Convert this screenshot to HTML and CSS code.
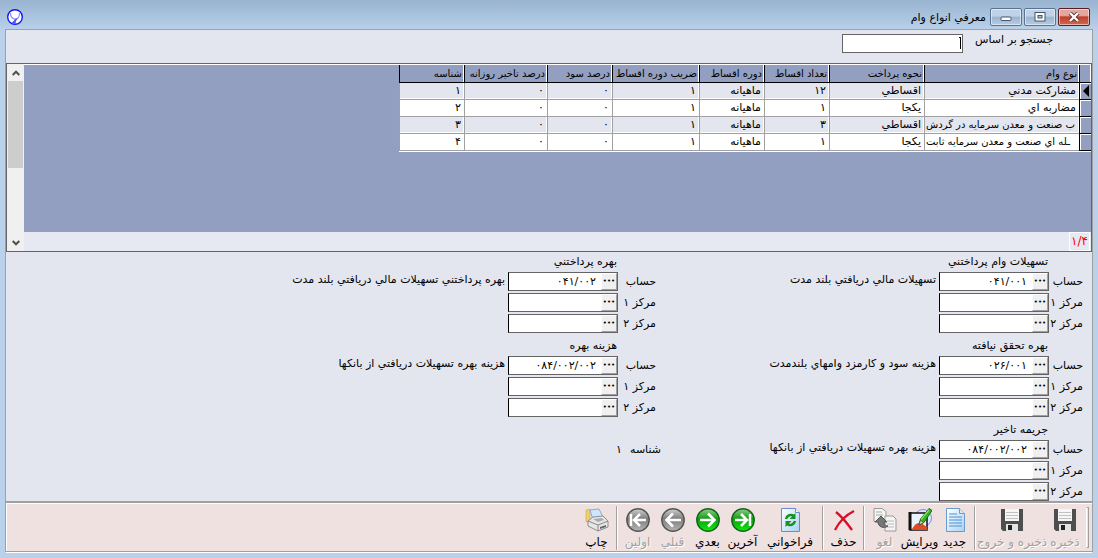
FILE: index.html
```html
<!DOCTYPE html>
<html lang="fa" dir="rtl">
<head>
<meta charset="utf-8">
<title>معرفي انواع وام</title>
<link rel="stylesheet" href="styles.css">
</head>
<body>
<header class="titlebar">
  <div class="window-buttons">
    <button class="win-btn close" aria-label="بستن"><svg width="12" height="10" viewBox="0 0 12 10"><path d="M2 1l8 8M10 1L2 9" stroke="#54323a" stroke-width="4"/><path d="M2 1l8 8M10 1L2 9" stroke="#fff" stroke-width="2.4"/></svg></button>
    <button class="win-btn" aria-label="بزرگ"><svg width="12" height="10" viewBox="0 0 12 10"><rect x="1" y=".5" width="10" height="8.500" fill="#fff" stroke="#47566b"/><rect x="4" y="3.500" width="4" height="2.500" fill="#a8bdd4" stroke="#47566b"/></svg></button>
    <button class="win-btn" aria-label="کوچک"><svg width="12" height="10" viewBox="0 0 12 10"><rect x="1" y="5" width="10" height="3.500" rx="1" fill="#fff" stroke="#47566b"/></svg></button>
  </div>
  <h1 class="title">معرفي انواع وام</h1>
  <svg class="app-icon" width="16" height="16" viewBox="0 0 16 16"><circle cx="8" cy="8" r="7.300" fill="#fff" stroke="#1414ee" stroke-width="1.400"/><path d="M3.500 4c-.3 4 2 6 5 6 3-.3 4-3 4-6" fill="none" stroke="#8f93ff" stroke-width="1.200"/><path d="M4.500 14l2-2 1.500-2 3-1-2 3-.5 3z" fill="#5058f0"/></svg>
</header>
<main class="window">
  <div class="search">
    <label for="q">جستجو بر اساس</label>
    <div class="search-box"><input id="q" type="text"><span class="caret"></span></div>
  </div>
  <section class="grid">
    <div class="grid-main">
      <div class="grid-view">
        <table>
          <colgroup><col class="c-mark"><col class="c-name"><col class="c-pay"><col class="c-std"><col class="c-std"><col class="c-rate"><col class="c-std"><col class="c-late"><col class="c-std"></colgroup>
          <thead><tr><th></th><th>نوع وام</th><th>نحوه پرداخت</th><th>تعداد اقساط</th><th>دوره اقساط</th><th>ضريب دوره اقساط</th><th>درصد سود</th><th>درصد تاخير روزانه</th><th>شناسه</th></tr></thead>
          <tbody>
            <tr><td class="mark"><svg width="8" height="12" viewBox="0 0 8 12"><path d="M7 0v12L1 6z"/></svg></td><td>مشارکت مدني</td><td>اقساطي</td><td>۱۲</td><td>ماهيانه</td><td>۱</td><td>۰</td><td>۰</td><td>۱</td></tr>
            <tr><td class="mark"></td><td>مضاربه اي</td><td>يکجا</td><td>۱</td><td>ماهيانه</td><td>۱</td><td>۰</td><td>۰</td><td>۲</td></tr>
            <tr><td class="mark"></td><td><div class="tail">ب صنعت و معدن سرمايه در گردش</div></td><td>اقساطي</td><td>۳</td><td>ماهيانه</td><td>۱</td><td>۰</td><td>۰</td><td>۳</td></tr>
            <tr><td class="mark"></td><td><div class="tail">ـله اي صنعت و معدن سرمايه ثابت</div></td><td>يکجا</td><td>۱</td><td>ماهيانه</td><td>۱</td><td>۰</td><td>۰</td><td>۴</td></tr>
          </tbody>
        </table>
      </div>
      <div class="grid-status"><span class="count">۱/۴</span></div>
    </div>
    <div class="scrollbar">
      <button aria-label="بالا"><svg width="8" height="6" viewBox="0 0 8 6"><path d="M.7 5L4 1.700 7.300 5" fill="none" stroke="#505050" stroke-width="2"/></svg></button>
      <div class="track"><div class="thumb"></div></div>
      <button aria-label="پايين"><svg width="8" height="6" viewBox="0 0 8 6"><path d="M.7 1L4 4.300 7.300 1" fill="none" stroke="#505050" stroke-width="2"/></svg></button>
    </div>
  </section>
  <form class="accounts">
    <fieldset class="group"><legend>تسهيلات وام پرداختني</legend>
      <div class="row"><label for="a1">حساب</label><div class="lookup"><button type="button" aria-label="انتخاب">•••</button><input id="a1" value="۰۴۱/۰۰۱"></div><span class="desc">تسهيلات مالي دريافتي بلند مدت</span></div>
      <div class="row"><label for="a2">مرکز ۱</label><div class="lookup"><button type="button" aria-label="انتخاب">•••</button><input id="a2"></div></div>
      <div class="row"><label for="a3">مرکز ۲</label><div class="lookup"><button type="button" aria-label="انتخاب">•••</button><input id="a3"></div></div>
    </fieldset>
    <fieldset class="group wide"><legend>بهره پرداختني</legend>
      <div class="row"><label for="b1">حساب</label><div class="lookup"><button type="button" aria-label="انتخاب">•••</button><input id="b1" value="۰۴۱/۰۰۲"></div><span class="desc">بهره پرداختني تسهيلات مالي دريافتي بلند مدت</span></div>
      <div class="row"><label for="b2">مرکز ۱</label><div class="lookup"><button type="button" aria-label="انتخاب">•••</button><input id="b2"></div></div>
      <div class="row"><label for="b3">مرکز ۲</label><div class="lookup"><button type="button" aria-label="انتخاب">•••</button><input id="b3"></div></div>
    </fieldset>
    <fieldset class="group"><legend>بهره تحقق نيافته</legend>
      <div class="row"><label for="c1">حساب</label><div class="lookup"><button type="button" aria-label="انتخاب">•••</button><input id="c1" value="۰۲۶/۰۰۱"></div><span class="desc">هزينه سود و کارمزد وامهاي بلندمدت</span></div>
      <div class="row"><label for="c2">مرکز ۱</label><div class="lookup"><button type="button" aria-label="انتخاب">•••</button><input id="c2"></div></div>
      <div class="row"><label for="c3">مرکز ۲</label><div class="lookup"><button type="button" aria-label="انتخاب">•••</button><input id="c3"></div></div>
    </fieldset>
    <fieldset class="group wide"><legend>هزينه بهره</legend>
      <div class="row"><label for="d1">حساب</label><div class="lookup"><button type="button" aria-label="انتخاب">•••</button><input id="d1" value="۰۸۴/۰۰۲/۰۰۲"></div><span class="desc">هزينه بهره تسهيلات دريافتي از بانکها</span></div>
      <div class="row"><label for="d2">مرکز ۱</label><div class="lookup"><button type="button" aria-label="انتخاب">•••</button><input id="d2"></div></div>
      <div class="row"><label for="d3">مرکز ۲</label><div class="lookup"><button type="button" aria-label="انتخاب">•••</button><input id="d3"></div></div>
    </fieldset>
    <fieldset class="group"><legend>جريمه تاخير</legend>
      <div class="row"><label for="e1">حساب</label><div class="lookup"><button type="button" aria-label="انتخاب">•••</button><input id="e1" value="۰۸۴/۰۰۲/۰۰۲"></div><span class="desc">هزينه بهره تسهيلات دريافتي از بانکها</span></div>
      <div class="row"><label for="e2">مرکز ۱</label><div class="lookup"><button type="button" aria-label="انتخاب">•••</button><input id="e2"></div></div>
      <div class="row"><label for="e3">مرکز ۲</label><div class="lookup"><button type="button" aria-label="انتخاب">•••</button><input id="e3"></div></div>
    </fieldset>
    <div class="ident"><span>شناسه</span><span>۱</span></div>
  </form>
  <svg class="defs" width="0" height="0" aria-hidden="true">
    <defs>
      <linearGradient id="green" x1="0" y1="0" x2="0" y2="1"><stop offset="0" stop-color="#8fce8f"/><stop offset=".45" stop-color="#119a11"/><stop offset="1" stop-color="#08f008"/></linearGradient>
      <linearGradient id="gray" x1="0" y1="0" x2="0" y2="1"><stop offset="0" stop-color="#d0d0d0"/><stop offset=".45" stop-color="#7c7c7c"/><stop offset="1" stop-color="#b5b5b5"/></linearGradient>
      <linearGradient id="sheet" x1="0" y1="0" x2="1" y2="1"><stop offset="0" stop-color="#fff"/><stop offset="1" stop-color="#a9d2f5"/></linearGradient>
      <symbol id="floppy" viewBox="0 0 24 24"><path d="M1 1h22v22H3l-2-2z" fill="#4e4e4e"/><path d="M5 1h14v12H5z" fill="#f6f6f6"/><path d="M6 4.500h12M6 7.500h12M6 10.500h12" stroke="#c2c2c2"/><path d="M6 16h12v7H6z" fill="#e4e4e4"/><path d="M8 17h4v5H8z" fill="#222"/></symbol>
    </defs>
  </svg>
  <nav class="toolbar">
    <span class="handle"></span>
    <button class="tool save" disabled><svg viewBox="0 0 24 24"><use href="#floppy"/></svg><span>ذخيره</span></button>
    <button class="tool save-exit" disabled><svg viewBox="0 0 24 24"><use href="#floppy"/></svg><span>ذخيره و خروج</span></button>
    <span class="sep"></span>
    <button class="tool"><svg viewBox="0 0 24 24"><path d="M3.500.5h13l5 5v18h-18z" fill="url(#sheet)" stroke="#6a9bd0"/><path d="M16.500.5v5h5" fill="#d8ebfb" stroke="#6a9bd0"/><path d="M6 6h8M6 9h13M6 12h13M6 15h13M6 18h13" stroke="#4f8fd4" stroke-width="1.200"/></svg><span>جديد</span></button>
    <button class="tool"><svg viewBox="0 0 24 24"><circle cx="15" cy="10" r="8.500" fill="#dfe6ff" stroke="#7d8fe0"/><path d="M2 5h17v17H2z" fill="#e9f3fd" stroke="#111" stroke-width="1.500"/><path d="M2 4v18" stroke="#111" stroke-width="3"/><path d="M4 21c3-5 6-7 9-6l6 4v3H4z" fill="#df4a27"/><path d="M11 17l1.500-6L21 .5l3 2-8 12z" fill="#35b51f" stroke="#156b10"/><path d="M13 11.500L21 2" stroke="#8be06a" stroke-width="1.200"/><path d="M11 17l1.500-4.500 3 2z" fill="#f2d5a1" stroke="#333" stroke-width=".5"/></svg><span>ويرايش</span></button>
    <button class="tool" disabled><svg viewBox="0 0 24 24"><path d="M1 .5h8l4 3v10H1z" fill="#f4f4f4" stroke="#999"/><path d="M3 4h6M3 7h7" stroke="#aaa"/><path d="M12 8h8l3 3v12H12z" fill="#f4f4f4" stroke="#999"/><path d="M14 13h7M14 16h7M14 19h7" stroke="#bbb"/><path d="M2 14l6-6 6 6h-3c0 3 2 4 4 4-4 3-10 1-10-4z" fill="#777" stroke="#555"/></svg><span>لغو</span></button>
    <span class="sep"></span>
    <button class="tool"><svg viewBox="0 0 24 24"><path d="M4 4c5 4 11 11 16 18M22 3C14 7 7 14 3 22" fill="none" stroke="#d80f2a" stroke-width="2.300"/></svg><span>حذف</span></button>
    <span class="sep"></span>
    <button class="tool reload"><svg viewBox="0 0 24 24"><path d="M3.500.5h14l4 4v19h-18z" fill="url(#sheet)" stroke="#6d89cf"/><path d="M17.500.5v4h4" fill="#fff" stroke="#6d89cf"/><path d="M8 11c1-4 5-5 8-3M17 13c-1 4-5 5-8 3" fill="none" stroke="#159322" stroke-width="2.600"/><path d="M17.500 5v6h-6zM7.500 19v-6h6z" fill="#159322"/></svg><span>فراخواني</span></button>
    <button class="tool"><svg viewBox="0 0 24 24"><circle cx="12" cy="12" r="11.200" fill="url(#green)" stroke="#14641a" stroke-width="1.400"/><path d="M4 12h12M10 6l6 6-6 6M19 6v12" fill="none" stroke="#fff" stroke-width="2.500"/></svg><span>آخرين</span></button>
    <button class="tool"><svg viewBox="0 0 24 24"><circle cx="12" cy="12" r="11.200" fill="url(#green)" stroke="#14641a" stroke-width="1.400"/><path d="M4 12h14M12 5.500l6.500 6.500-6.500 6.500" fill="none" stroke="#fff" stroke-width="2.600"/></svg><span>بعدي</span></button>
    <button class="tool" disabled><svg viewBox="0 0 24 24"><circle cx="12" cy="12" r="11.200" fill="url(#gray)" stroke="#555" stroke-width="1.400"/><path d="M20 12H6M12 5.500L5.500 12l6.500 6.500" fill="none" stroke="#fff" stroke-width="2.600"/></svg><span>قبلي</span></button>
    <button class="tool" disabled><svg viewBox="0 0 24 24"><circle cx="12" cy="12" r="11.200" fill="url(#gray)" stroke="#555" stroke-width="1.400"/><path d="M20 12H8M14 6l-6 6 6 6M5 6v12" fill="none" stroke="#fff" stroke-width="2.500"/></svg><span>اولين</span></button>
    <span class="sep"></span>
    <button class="tool"><svg viewBox="0 0 24 24"><path d="M1 2l4-1v12l-4 1z" fill="#f1ce67" stroke="#c8a84e" stroke-width=".6"/><path d="M5 2l9-1 4 8-10 3z" fill="#cfe5fb" stroke="#6d9ad0" stroke-width=".8"/><path d="M3 13l5-4 10-1 5 5v6l-10 4-10-5z" fill="#e6e6e6" stroke="#777" stroke-width=".8"/><path d="M3 13l10 4 10-4M13 17v6" fill="none" stroke="#888"/><path d="M8 11l9-1 2 2-6 2z" fill="#aaa"/><path d="M15 19l6-2v2l-6 2z" fill="#666"/></svg><span>چاپ</span></button>
  </nav>
</main>
</body>
</html>
```
FILE: styles.css
```css
* { box-sizing: border-box; }
body {
  margin: 0;
  min-height: 100vh;
  display: flex;
  flex-direction: column;
  padding: 0 5px 5px;
  background: linear-gradient(#99b4d1 0, #b9d1ea 30px, #b9d1ea 100%);
  font: 11px/16px "DejaVu Sans", sans-serif;
  color: #000;
}
button, input { font: inherit; color: inherit; margin: 0; padding: 0; border: 0; border-radius: 0; }
button { display: flex; align-items: center; justify-content: center; }
.titlebar { display: flex; height: 29px; padding: 8px 3px 0 2px; align-items: flex-start; }
.window-buttons { display: flex; gap: 2px; }
.win-btn {
  width: 32px; height: 18px;
  border: 1px solid #5b7390; border-radius: 2px;
  box-shadow: inset 0 0 0 1px rgba(255,255,255,.5);
  background: linear-gradient(#bfd2e8 45%, #9ab4d1 50%, #b5cce4);
}
.win-btn.close { border-color: #5a1f25; background: linear-gradient(#e3a79d 40%, #c0402b 50%, #cf6a50); }
.title { margin: 2px 4px 0 0; font: inherit; }
.app-icon { margin: 1px auto 0 0; }
.window {
  flex: 1;
  display: flex;
  flex-direction: column;
  border: 1px solid #a0a0a0;
  border-bottom: 1px solid #fff;
  background: #e3e6ef;
}
.search { display: flex; height: 33px; padding: 4px 39px 0 0; gap: 10px; }
.search label { width: 80px; line-height: 12px; white-space: nowrap; }
.search-box { position: relative; width: 121px; height: 19px; }
.search-box input { width: 100%; height: 100%; border: 1px solid #646464; background: #fff; display: block; padding: 0 3px; }
.caret { position: absolute; top: 3px; right: 2px; width: 2px; height: 12px; border-right: 1px solid #000; border-top: 1px solid #000; }
.grid { flex: 1; display: flex; min-height: 188px; border: 1px solid #646464; }
.grid-main { flex: 1; display: flex; flex-direction: column; min-width: 0; }
.grid-view { flex: 1; background: #929fc0; border-top: 1px solid #fff; }
table { table-layout: fixed; width: 692px; border-collapse: separate; border-spacing: 0; border-bottom: 1px solid #fff; }
.c-mark { width: 12px; }
.c-name { width: 155px; }
.c-pay { width: 95px; }
.c-std { width: 65px; }
.c-rate { width: 87px; }
.c-late { width: 83px; }
th, td { height: 17px; padding: 0 3px; line-height: 16px; text-align: right; font-weight: normal; white-space: nowrap; overflow: hidden; }
th { height: 18px; padding: 0 2px 0 0; font-size: 10px; line-height: 17px; border-left: 1px solid #000; border-bottom: 1px solid #000; box-shadow: inset -1px 0 #fff; }
td { background: #fff; border-left: 1px solid #a0a0a0; border-bottom: 1px solid #a0a0a0; }
tbody tr:nth-child(odd) td { background: #e3e6ef; box-shadow: inset -1px -1px #fff; }
tbody tr .mark, tbody tr:nth-child(odd) .mark { padding: 0 1px; background: #929fc0; border-color: #000; box-shadow: inset 1px 1px #fff; }
.mark svg { display: block; }
.tail { display: flex; justify-content: flex-end; margin: 0 -3px 0 -2px; overflow: hidden; font-size: 10px; }
.grid-status { display: flex; height: 19px; padding-right: 1px; background: #e6e9f2; }
.count { width: 21px; border: 1px solid #fff; color: #f00; font-size: 12px; line-height: 17px; text-align: center; }
.scrollbar { display: flex; flex-direction: column; width: 17px; background: #f0f0f0; }
.scrollbar button { height: 17px; background: #f0f0f0; }
.track { flex: 1; }
.thumb { height: 87px; margin: 0 1px; background: #cdcdcd; }
.accounts { display: grid; grid-template-columns: 422px 1fr; row-gap: 3px; padding: 0 9px 0 0; }
.group { display: flex; flex-direction: column; gap: 2px; min-width: 0; margin: 0; padding: 0; border: 0; }
.group legend { height: 20px; padding: 0 35px 0 0; line-height: 20px; }
.row { display: flex; height: 19px; }
.row label { flex: none; width: 34px; line-height: 20px; white-space: nowrap; }
.wide { padding-right: 5px; }
.wide .row label { width: 38px; }
.wide legend { padding-right: 39px; }
.lookup { display: flex; flex: none; width: 110px; border: 1px solid #646464; border-left-color: #000; }
.lookup button { width: 16px; background: #f0f0f0; border: 1px solid #fff; border-right-color: #a0a0a0; border-bottom-color: #a0a0a0; font-size: 7px; line-height: 15px; }
.lookup input { flex: 1; min-width: 0; padding: 0 5px; background: #fff; direction: ltr; text-align: right; }
.desc { padding-right: 3px; line-height: 16px; white-space: nowrap; }
.ident { display: flex; gap: 4px; padding-top: 21px; line-height: 18px; }
.ident span:first-child { width: 35px; }
.defs { position: absolute; }
.toolbar {
  display: flex;
  height: 51px;
  padding: 3px 3px 1px;
  border-top: 2px solid #a0a0a0;
  border-bottom: 1px solid #a0a0a0;
  box-shadow: inset 1px 1px #fff;
  background: #efe1e0;
}
.handle { width: 3px; margin: 1px 0 2px 2px; border: 1px solid #a0a0a0; border-left-color: #fff; }
.sep { width: 2px; margin: 0 2px; border-right: 1px solid #fff; border-left: 1px solid #a0a0a0; }
.tool { flex: none; width: 35px; flex-direction: column; justify-content: flex-start; gap: 3px; padding-top: 2px; background: none; white-space: nowrap; }
.tool svg { flex: none; width: 24px; height: 24px; }
.tool span { font-size: 12px; line-height: 14px; }
.tool:disabled { color: #a0a0a0; text-shadow: 1px 1px #fff; }
.save { width: 38px; }
.save-exit { width: 68px; }
.reload { width: 60px; }
```
